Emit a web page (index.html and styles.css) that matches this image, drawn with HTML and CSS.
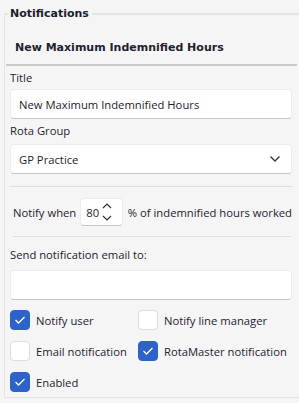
FILE: index.html
```html
<!DOCTYPE html>
<html>
<head>
<meta charset="utf-8">
<link rel="stylesheet" href="styles.css">
</head>
<body>
<fieldset class="group">
  <legend class="legend">Notifications</legend>
  <div class="header">New Maximum Indemnified Hours</div>
  <div class="form">
    <label class="label">Title</label>
    <div class="input">New Maximum Indemnified Hours</div>
    <label class="label label-gap">Rota Group</label>
    <div class="input select">
      <span>GP Practice</span>
      <svg class="chev" width="12" height="8" viewBox="0 0 12 8"><path d="M1.5 1.5 L6 6 L10.5 1.5" fill="none" stroke="#333" stroke-width="1.3"/></svg>
    </div>
    <div class="divider"></div>
    <div class="notify-row">
      <span>Notify when</span>
      <div class="spin">
        <span>80</span>
        <svg class="arrows" width="12" height="20" viewBox="0 0 12 20"><path d="M2 6 L6 2 L10 6" fill="none" stroke="#333" stroke-width="1.2"/><path d="M2 14 L6 18 L10 14" fill="none" stroke="#333" stroke-width="1.2"/></svg>
      </div>
      <span class="after">% of indemnified hours worked</span>
    </div>
    <div class="divider divider2"></div>
    <label class="label email-label">Send notification email to:</label>
    <div class="input empty"></div>
    <div class="checks">
      <div class="check"><span class="box on"><svg width="12" height="10" viewBox="0 0 12 10"><path d="M1.5 5 L4.5 8 L10.5 2" fill="none" stroke="#fff" stroke-width="1.3"/></svg></span>Notify user</div>
      <div class="check"><span class="box"></span>Notify line manager</div>
      <div class="check"><span class="box"></span>Email notification</div>
      <div class="check"><span class="box on"><svg width="12" height="10" viewBox="0 0 12 10"><path d="M1.5 5 L4.5 8 L10.5 2" fill="none" stroke="#fff" stroke-width="1.3"/></svg></span>RotaMaster notification</div>
      <div class="check"><span class="box on"><svg width="12" height="10" viewBox="0 0 12 10"><path d="M1.5 5 L4.5 8 L10.5 2" fill="none" stroke="#fff" stroke-width="1.3"/></svg></span>Enabled</div>
    </div>
  </div>
</fieldset>
</body>
</html>
```
FILE: styles.css
```css
html, body {
  margin: 0;
  padding: 0;
  background: #f5f5f5;
}
body {
  font-family: "Open Sans", "Noto Sans", sans-serif;
  font-size: 11.25px;
  color: #1f2230;
  width: 299px;
  height: 403px;
  overflow: hidden;
}
.group {
  margin: 7px 0 0 4px;
  padding: 0 0 5px 0;
  border: 1px solid #e3e3e3;
  border-top-width: 2px;
  border-right: none;
  min-width: 0;
}
.legend {
  font-family: "DejaVu Sans", sans-serif;
  font-weight: bold;
  font-size: 11px;
  line-height: 13px;
  padding: 0 3px 0 2px;
  margin-left: 3px;
  color: #1a1d2b;
}
.header {
  font-family: "DejaVu Sans", sans-serif;
  font-weight: bold;
  font-size: 11px;
  line-height: 13px;
  padding: 21px 0 10px 9px;
  margin: 0 2px 0 1px;
  border-bottom: 2px solid #c9c9c9;
}
.form {
  display: flex;
  flex-direction: column;
  padding: 4px 7px 0 5px;
}
.label {
  display: block;
  line-height: 16px;
  margin-bottom: 3px;
}
.label-gap { margin-top: 4px; margin-bottom: 5px; }
.input {
  height: 30px;
  box-sizing: border-box;
  background: #fff;
  border-radius: 4px;
  border: 1px solid #ececec;
  border-bottom: 1px solid #c4c4c4;
  display: flex;
  align-items: center;
  padding: 0 8px;
}
.select { justify-content: space-between; }
.chev { margin-right: 2px; }
.divider {
  height: 1px;
  background: #dedede;
  margin-top: 12px;
}
.notify-row {
  display: flex;
  align-items: center;
  gap: 3px;
  padding-left: 3px;
  margin-top: 11px;
  white-space: nowrap;
}
.spin {
  width: 51px;
  height: 28px;
  box-sizing: border-box;
  background: #fff;
  border: 1px solid #ececec;
  border-bottom: 1px solid #c4c4c4;
  border-radius: 4px;
  display: flex;
  align-items: center;
  justify-content: space-between;
  padding: 0 9px 0 5px;
  margin-left: 1px;
}
.after { margin-left: 2px; }
.divider2 { margin: 10px 1px 0 3px; }
.email-label { margin-top: 10px; margin-bottom: 7px; }
.empty { height: 30px; }
.checks {
  display: grid;
  grid-template-columns: 128px 1fr;
  row-gap: 11px;
  margin-top: 10px;
}
.check {
  display: flex;
  align-items: center;
  gap: 6px;
  height: 20px;
  white-space: nowrap;
}
.box {
  flex: none;
  width: 20px;
  height: 20px;
  box-sizing: border-box;
  border-radius: 4px;
  background: #fff;
  border: 1px solid #dcdcdc;
  display: flex;
  align-items: center;
  justify-content: center;
}
.box.on {
  background: #2d63c8;
  border-color: #2d63c8;
}
```
